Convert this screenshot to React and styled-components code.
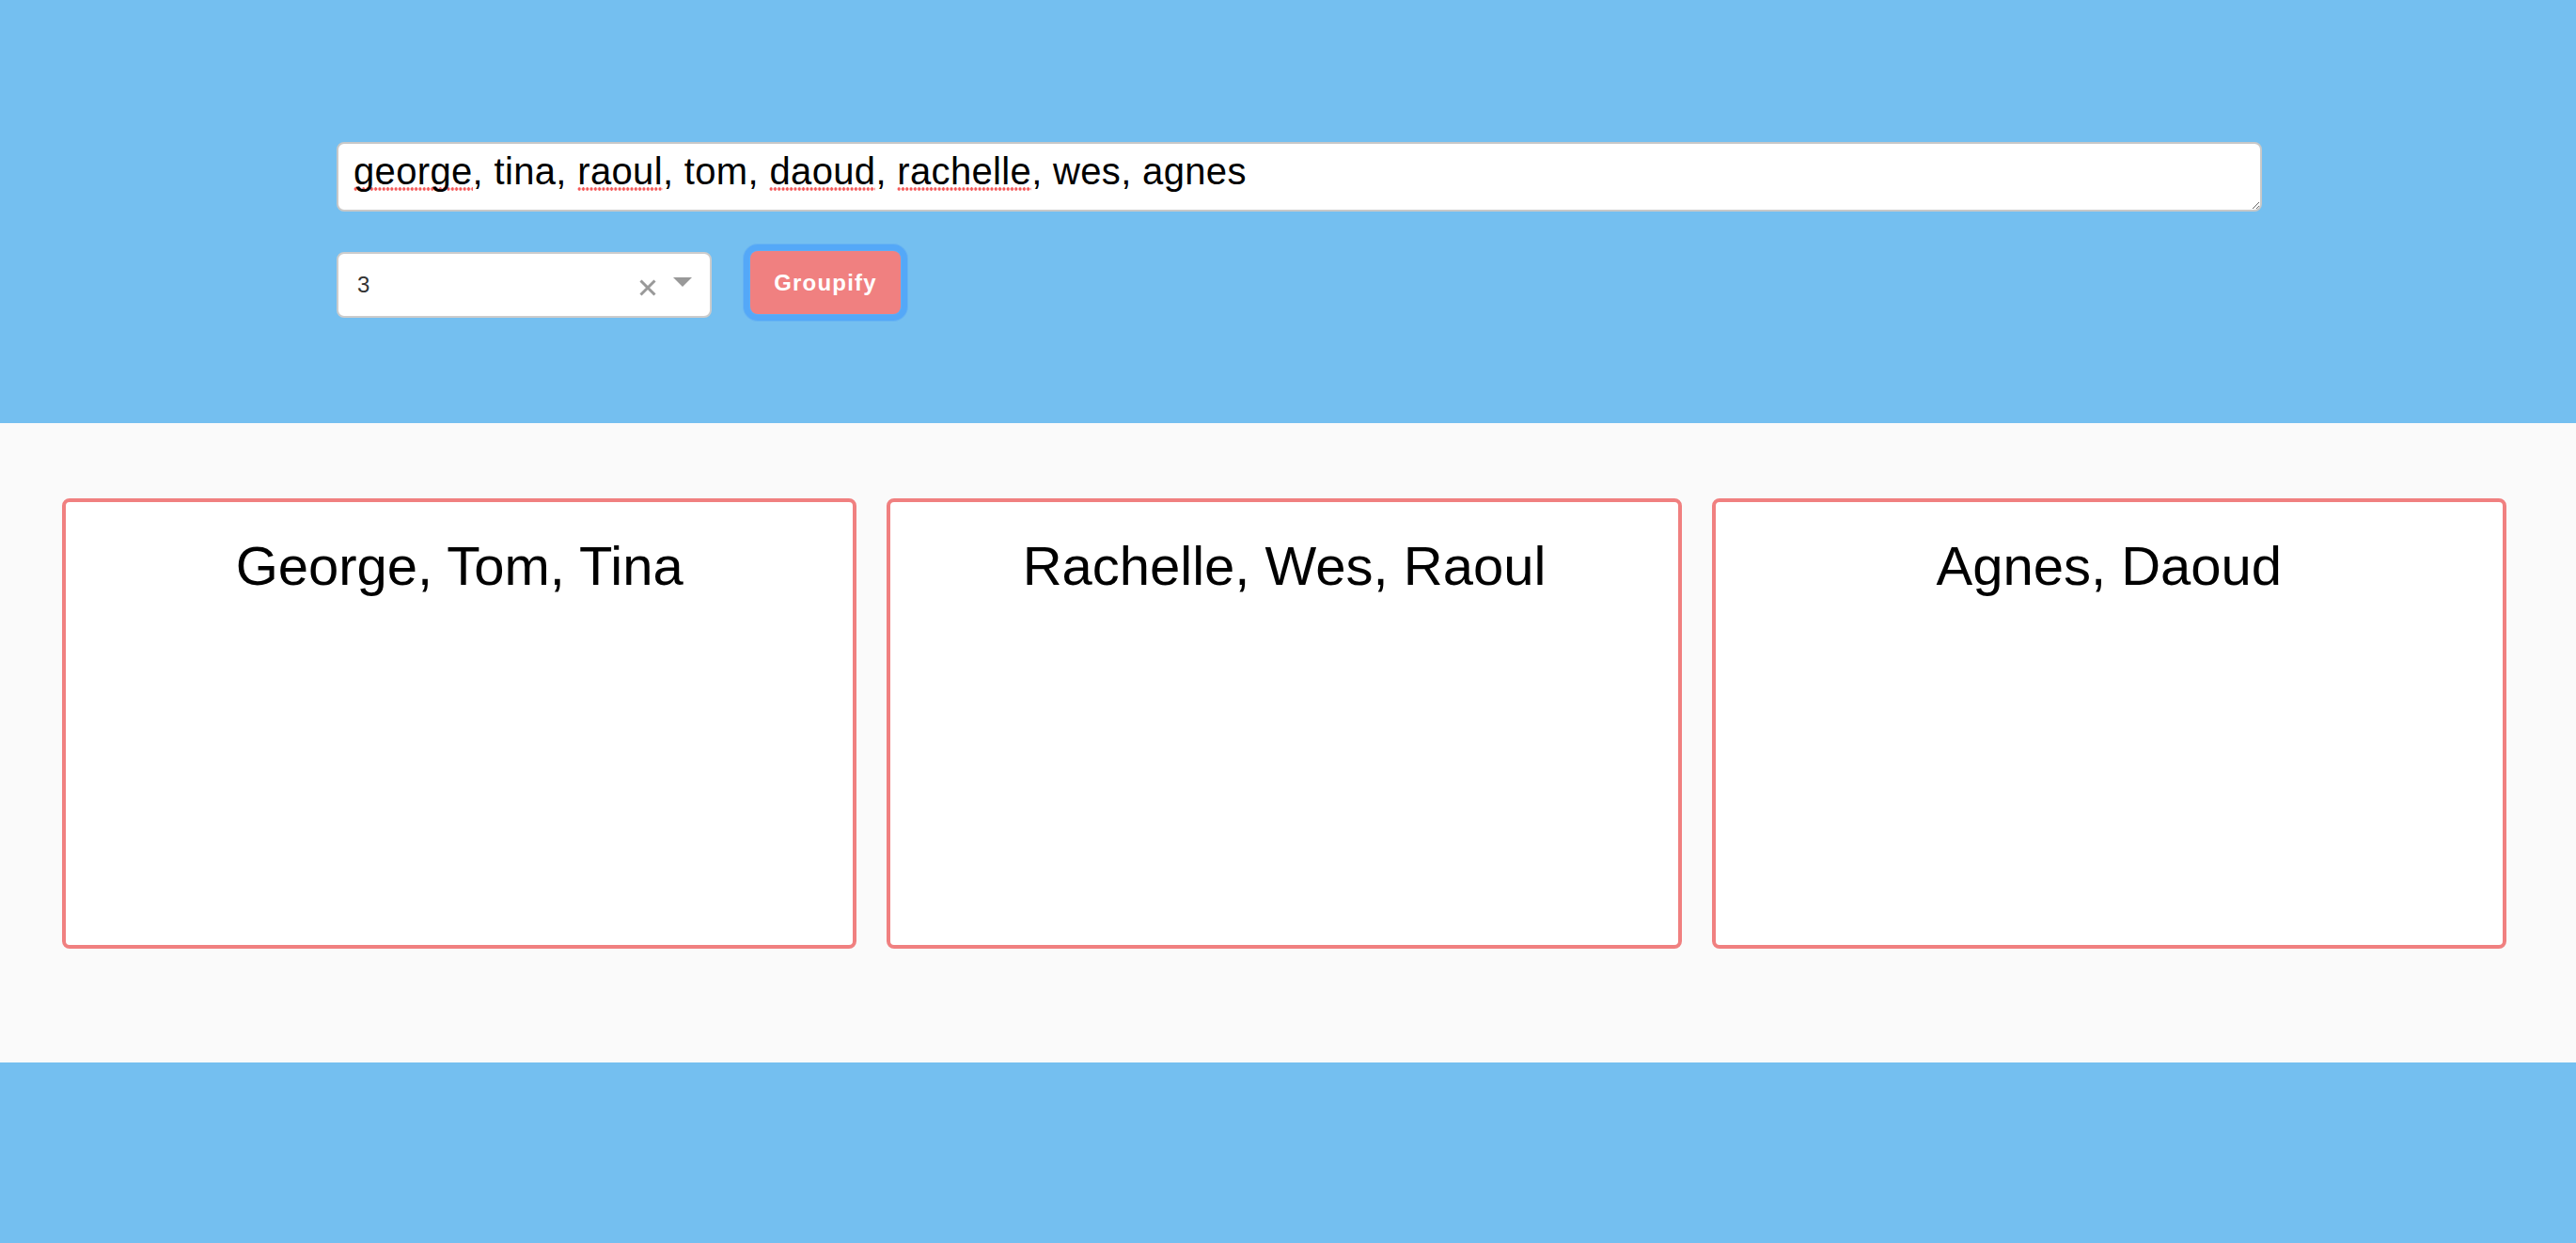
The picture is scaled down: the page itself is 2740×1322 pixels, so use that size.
import React from "react";
import styled, { createGlobalStyle } from "styled-components";

const GlobalStyle = createGlobalStyle`
  html, body {
    margin: 0;
    padding: 0;
    background: #74bff0;
    font-family: "Liberation Sans", Arial, Helvetica, sans-serif;
  }
`;

const Page = styled.div`
  min-height: 1322px;
  background: #74bff0;
`;

const Header = styled.header`
  height: 450px;
  box-sizing: border-box;
  padding: 151px 0 0 358px;
  background: #74bff0;
`;

const Controls = styled.div`
  width: 2048px;
  display: flex;
  flex-direction: column;
  gap: 42px;
`;

const NamesBox = styled.div`
  height: 74px;
  box-sizing: border-box;
  border: 2px solid #c8c8c8;
  border-radius: 8px;
  background: #fff;
  padding: 6px 16px 4px;
  font-size: 40px;
  letter-spacing: 0.34px;
  line-height: 46px;
  color: #000;
  white-space: nowrap;
  resize: vertical;
  overflow: auto;
  outline: none;
  scrollbar-width: none;
`;

const Misspelled = styled.span`
  background-image: radial-gradient(circle, #f55a5a 1.5px, transparent 1.9px);
  background-repeat: repeat-x;
  background-size: 4.3px 4px;
  background-position: 0 calc(100% - 1px);
`;

const Row = styled.div`
  display: flex;
  align-items: flex-start;
  gap: 41px;
`;

const Select = styled.div`
  width: 399px;
  height: 70px;
  margin-top: 1px;
  box-sizing: border-box;
  border: 2px solid #cccccc;
  border-radius: 8px;
  background: #fff;
  display: flex;
  align-items: center;
  padding: 0 19px 0 20px;
`;

const SelectValue = styled.span`
  flex: 1;
  font-size: 24px;
  color: #333;
`;

const Clear = styled.svg`
  width: 18px;
  height: 18px;
  margin-top: 5px;
  margin-right: 18px;
`;

const Arrow = styled.span`
  width: 0;
  height: 0;
  border-style: solid;
  border-width: 10px 10px 0 10px;
  border-color: #999 transparent transparent transparent;
  margin-top: -7px;
`;

const Button = styled.button`
  width: 160px;
  height: 67px;
  margin: 0;
  border: none;
  border-radius: 8px;
  background: #f08080;
  color: #fff;
  font-family: "Liberation Sans", Arial, Helvetica, sans-serif;
  font-weight: bold;
  font-size: 24px;
  letter-spacing: 1.2px;
  padding: 0;
  box-shadow: 0 0 0 1px #5fadf5, 0 0 0 7px #54a8f8, 0 0 0 8px #68b4f2;
  cursor: pointer;
`;

const Results = styled.section`
  height: 680px;
  box-sizing: border-box;
  padding: 80px 74px 0 66px;
  background: #fafafa;
  display: grid;
  grid-template-columns: repeat(3, 1fr);
  gap: 32px;
  align-items: start;
`;

const Card = styled.div`
  height: 479px;
  box-sizing: border-box;
  border: 4px solid #f08080;
  border-radius: 8px;
  background: #fff;
  padding-top: 34px;
`;

const CardTitle = styled.h2`
  margin: 0;
  font-size: 58px;
  font-weight: normal;
  text-align: center;
  color: #000;
`;

const groups = [
  "George, Tom, Tina",
  "Rachelle, Wes, Raoul",
  "Agnes, Daoud",
];

export default function App() {
  return (
    <Page>
      <GlobalStyle />
      <Header>
        <Controls>
          <NamesBox role="textbox" contentEditable suppressContentEditableWarning>
            <Misspelled>george</Misspelled>, tina, <Misspelled>raoul</Misspelled>, tom,{" "}
            <Misspelled>daoud</Misspelled>, <Misspelled>rachelle</Misspelled>, wes, agnes
          </NamesBox>
          <Row>
            <Select>
              <SelectValue>3</SelectValue>
              <Clear viewBox="0 0 18 18">
                <path d="M1.5 1.5 L16.5 16.5 M16.5 1.5 L1.5 16.5" stroke="#999" strokeWidth="3" fill="none" />
              </Clear>
              <Arrow />
            </Select>
            <Button>Groupify</Button>
          </Row>
        </Controls>
      </Header>
      <Results>
        {groups.map((g) => (
          <Card key={g}>
            <CardTitle>{g}</CardTitle>
          </Card>
        ))}
      </Results>
    </Page>
  );
}
